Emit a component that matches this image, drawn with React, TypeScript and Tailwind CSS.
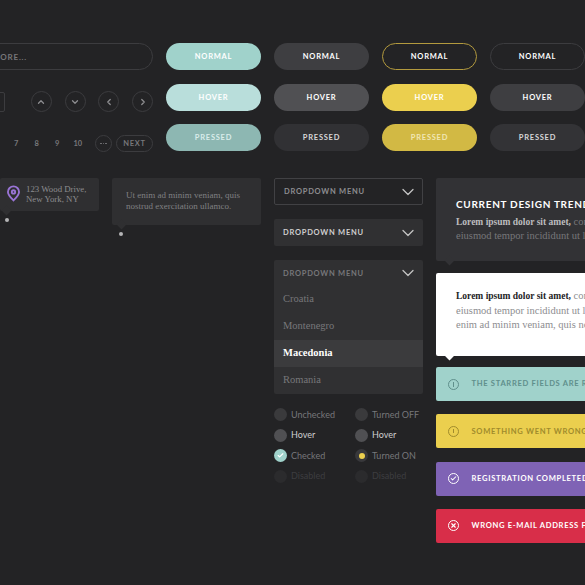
import React from "react";
import { ChevronDown, ChevronLeft, ChevronRight, ChevronUp, Check, X } from "lucide-react";

const label = "font-['Lato',sans-serif] font-bold uppercase";
const serif = "font-['Liberation_Serif',serif]";

const buttonColumns = [
  [
    { text: "Normal", cls: "bg-[#a0d2cb] text-white" },
    { text: "Hover", cls: "bg-[#b9dedb] text-white" },
    { text: "Pressed", cls: "bg-[#8db7b2] text-[#d9ecea]" },
  ],
  [
    { text: "Normal", cls: "bg-[#3e3e41] text-white" },
    { text: "Hover", cls: "bg-[#505053] text-white" },
    { text: "Pressed", cls: "bg-[#313134] text-[#d8d8d8]" },
  ],
  [
    { text: "Normal", cls: "border border-[#b39a3e] text-white" },
    { text: "Hover", cls: "bg-[#ebcf4e] text-white" },
    { text: "Pressed", cls: "bg-[#d2b944] text-[#f1e7b4]" },
  ],
  [
    { text: "Normal", cls: "border border-[#3c3c3f] text-white" },
    { text: "Hover", cls: "bg-[#3e3e41] text-white" },
    { text: "Pressed", cls: "bg-[#333336] text-[#d8d8d8]" },
  ],
];

const checks = [
  ["Unchecked", "Turned OFF"],
  ["Hover", "Hover"],
  ["Checked", "Turned ON"],
  ["Disabled", "Disabled"],
];

function Tail({ className }: { className: string }) {
  return <span className={`absolute h-[7px] w-[7px] rotate-45 ${className}`} />;
}

function Chevron() {
  return <ChevronDown size={20} strokeWidth={1.5} className="text-[#c4c4c4]" />;
}

function Pin() {
  return (
    <svg width="13" height="17" viewBox="0 0 14 17" fill="none" stroke="#9a74d6" strokeWidth="2">
      <path d="M7 16 C4 13 1 10 1 6.8 A6 6 0 0 1 13 6.8 C13 10 10 13 7 16 Z" />
      <circle cx="7" cy="6.8" r="1.8" />
    </svg>
  );
}

function AlertIcon({ kind, color }: { kind: "info" | "warn" | "ok" | "err"; color: string }) {
  return (
    <span
      className="flex h-[11px] w-[11px] shrink-0 items-center justify-center rounded-full border-[1.5px]"
      style={{ borderColor: color, color }}
    >
      {kind === "ok" && <Check size={7} strokeWidth={3.5} />}
      {kind === "err" && <X size={7} strokeWidth={4} />}
      {kind === "info" && <span className="h-[5px] w-[1.5px] bg-current" />}
      {kind === "warn" && <span className="h-[4px] w-[1.5px] bg-current" />}
    </span>
  );
}

function Alert({
  text,
  kind,
  cls,
  color,
}: {
  text: string;
  kind: "info" | "warn" | "ok" | "err";
  cls: string;
  color: string;
}) {
  return (
    <div className={`flex h-[34px] w-[220px] items-center gap-[12.5px] rounded-[2px] pl-[12px] ${cls}`}>
      <AlertIcon kind={kind} color={color} />
      <span className={`${label} whitespace-nowrap text-[7.6px] tracking-[0.09em]`}>{text}</span>
    </div>
  );
}

export default function App() {
  return (
    <div className="h-[585px] w-[585px] overflow-hidden bg-[#232325] pt-[43px]">
      {/* top: inputs + button states */}
      <div className="flex gap-[13px]">
        <div className="flex w-[153px] shrink-0 flex-col items-end">
          <div className="flex h-[27px] w-[200px] items-center justify-end rounded-full border border-[#3c3c3f] pr-[125px] pt-[1px]">
            <span className={`${label} whitespace-nowrap text-[8px] tracking-[0.1em] text-[#77777a]`}>Show more...</span>
          </div>
          <div className="mt-[21px] flex items-center gap-[13px]">
            <span className="h-[20px] w-[20px] rounded-[2px] border border-[#3c3c3f]" />
            <div className="ml-[13px] flex gap-[12.7px]">
              {[ChevronUp, ChevronDown, ChevronLeft, ChevronRight].map((Icon, i) => (
                <span
                  key={i}
                  className="flex h-[21px] w-[21px] items-center justify-center rounded-full border border-[#3c3c3f] text-[#8d8d90]"
                >
                  <Icon size={10} strokeWidth={3} />
                </span>
              ))}
            </div>
          </div>
          <div className="mt-[23px] flex items-center">
            <div className={`${label} flex text-[7.5px] text-[#77777a]`}>
              {["7", "8", "9", "10"].map((n) => (
                <span key={n} className="w-[20.5px] text-center">
                  {n}
                </span>
              ))}
            </div>
            <span className="ml-[7px] flex h-[17px] w-[17px] items-center justify-center gap-[1px] rounded-full border border-[#3c3c3f]">
              <span className="h-[1.5px] w-[1.5px] rounded-full bg-[#77777a]" />
              <span className="h-[1.5px] w-[1.5px] rounded-full bg-[#77777a]" />
              <span className="h-[1.5px] w-[1.5px] rounded-full bg-[#77777a]" />
            </span>
            <span
              className={`${label} ml-[4px] flex h-[17px] w-[37px] items-center justify-center rounded-full border border-[#3c3c3f] text-[7.5px] tracking-[0.1em] text-[#77777a]`}
            >
              Next
            </span>
          </div>
        </div>
        {buttonColumns.map((col, i) => (
          <div key={i} className="flex w-[95px] shrink-0 flex-col gap-[13.5px]">
            {col.map((b) => (
              <div
                key={b.text}
                className={`${label} flex h-[27px] items-center justify-center rounded-full pt-[1px] text-[7.5px] tracking-[0.1em] ${b.cls}`}
              >
                {b.text}
              </div>
            ))}
          </div>
        ))}
      </div>

      {/* bottom: tooltips, dropdowns, notifications */}
      <div className="mt-[26px] flex gap-[13px]">
        <div className="flex w-[99px] shrink-0 flex-col items-start">
          <div className="relative flex h-[33px] w-full items-center gap-[6px] rounded-[2px] bg-[#2f2f31] pb-[2px] pl-[7px]">
            <Pin />
            <p className={`${serif} whitespace-nowrap text-[8.8px] leading-[10px] text-[#8c8c8f]`}>
              123 Wood Drive,
              <br />
              New York, NY
            </p>
            <Tail className="bottom-[-3px] left-[3px] bg-[#2f2f31]" />
          </div>
          <span className="ml-[5px] mt-[7px] h-[4px] w-[4px] rounded-full bg-[#b4b4b6]" />
        </div>

        <div className="flex w-[149px] shrink-0 flex-col items-start">
          <div className={`${serif} relative h-[47px] w-full rounded-[2px] bg-[#2f2f31] px-[14px] pt-[12px] text-[9px] leading-[11px] text-[#808083]`}>
            Ut enim ad minim veniam, quis nostrud exercitation ullamco.
            <Tail className="bottom-[-3px] left-[6px] bg-[#2f2f31]" />
          </div>
          <span className="ml-[7px] mt-[7px] h-[4px] w-[4px] rounded-full bg-[#b4b4b6]" />
        </div>

        <div className="flex w-[149px] shrink-0 flex-col">
          <div className="flex h-[27px] items-center justify-between rounded-[2px] border border-[#414144] pl-[9px] pr-[4px]">
            <span className={`${label} pt-[1px] text-[7.5px] tracking-[0.1em] text-[#8d8d90]`}>Dropdown menu</span>
            <Chevron />
          </div>
          <div className="mt-[14px] flex h-[27px] items-center justify-between rounded-[2px] bg-[#303032] pl-[9px] pr-[5px]">
            <span className={`${label} text-[7.5px] tracking-[0.1em] text-[#cfcfcf]`}>Dropdown menu</span>
            <Chevron />
          </div>
          <div className="mt-[14px] rounded-[2px] bg-[#303032]">
            <div className="flex h-[26px] items-center justify-between pl-[9px] pr-[5px]">
              <span className={`${label} pt-[1px] text-[7.5px] tracking-[0.1em] text-[#77777a]`}>Dropdown menu</span>
              <Chevron />
            </div>
            {["Croatia", "Montenegro", "Macedonia", "Romania"].map((c) => (
              <div
                key={c}
                className={`${serif} flex h-[27px] items-center pb-[2px] pl-[9px] text-[10.5px] ${
                  c === "Macedonia" ? "bg-[#3b3b3d] font-bold text-white" : "text-[#77777a]"
                }`}
              >
                {c}
              </div>
            ))}
          </div>

          <div className="mt-[14px] grid grid-cols-[81px_68px] gap-y-[7.5px] font-['Lato',sans-serif] text-[9px]">
            {checks.map((row, r) =>
              row.map((text, c) => (
                <div key={c} className="flex h-[13px] items-center gap-[4px]">
                  {r === 0 && <span className="h-[13px] w-[13px] rounded-full bg-[#3a3a3c]" />}
                  {r === 1 && <span className="h-[13px] w-[13px] rounded-full bg-[#505053]" />}
                  {r === 2 && c === 0 && (
                    <span className="flex h-[13px] w-[13px] items-center justify-center rounded-full bg-[#a0d2cb] text-white">
                      <Check size={7} strokeWidth={4} />
                    </span>
                  )}
                  {r === 2 && c === 1 && (
                    <span className="flex h-[13px] w-[13px] items-center justify-center rounded-full bg-[#38383b]">
                      <span className="h-[6px] w-[6px] rounded-full bg-[#ebcf4e]" />
                    </span>
                  )}
                  {r === 3 && <span className="h-[13px] w-[13px] rounded-full bg-[#2b2b2d]" />}
                  <span
                    className={
                      r === 1 ? "text-[#cfcfcf]" : r === 3 ? "text-[#3d3d40]" : "text-[#77777a]"
                    }
                  >
                    {text}
                  </span>
                </div>
              ))
            )}
          </div>
        </div>

        <div className="flex w-[220px] shrink-0 flex-col">
          <div className="relative h-[83px] rounded-[2px] bg-[#323235] pl-[20px] pt-[20px]">
            <h3 className={`${label} whitespace-nowrap text-[10px] leading-[13px] tracking-[0.07em] text-white`}>
              Current design trends
            </h3>
            <p className={`${serif} mt-[4px] whitespace-nowrap text-[10.5px] leading-[14px] text-[#77777a]`}>
              <b className="text-[9.5px] text-[#bdbdbf]">Lorem ipsum dolor sit amet,</b> consectetur
              <br />
              eiusmod tempor incididunt ut labore
            </p>
            <Tail className="bottom-[-3px] left-[10px] bg-[#323235]" />
          </div>
          <div className="relative mt-[12px] h-[83px] rounded-[2px] bg-white pl-[20px] pt-[16px]">
            <p className={`${serif} whitespace-nowrap text-[10.5px] leading-[14.5px] text-[#8d8d90]`}>
              <b className="text-[9.5px] text-[#232325]">Lorem ipsum dolor sit amet,</b> consectetur
              <br />
              eiusmod tempor incididunt ut labore
              <br />
              enim ad minim veniam, quis nostrud
            </p>
            <Tail className="bottom-[-3px] left-[10px] bg-white" />
          </div>
          <div className="mt-[11px] flex flex-col gap-[13.3px]">
            <Alert text="The starred fields are required" kind="info" cls="bg-[#a0d2cb] text-[#5f8f8b]" color="#5f8f8b" />
            <Alert text="Something went wrong" kind="warn" cls="bg-[#ebcf4e] text-[#a08b2c]" color="#a08b2c" />
            <Alert text="Registration completed" kind="ok" cls="bg-[#7f63b5] text-white" color="#ffffff" />
            <Alert text="Wrong e-mail address format" kind="err" cls="bg-[#d82e49] text-white" color="#ffffff" />
          </div>
        </div>
      </div>
    </div>
  );
}
